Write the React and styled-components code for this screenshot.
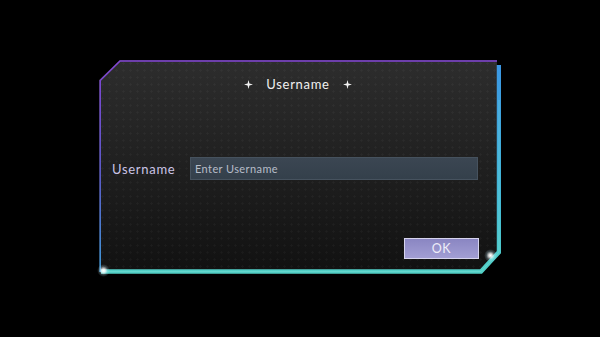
import React from 'react'
import styled, { createGlobalStyle } from 'styled-components'

const Global = createGlobalStyle`
  html, body {
    margin: 0;
    padding: 0;
    background: #000;
  }
  body {
    font-family: Lato, "Noto Sans", sans-serif;
  }
`

const Star = () => (
  <svg width="9" height="9" viewBox="0 0 10 10">
    <path d="M5 0 L6 4 L10 5 L6 6 L5 10 L4 6 L0 5 L4 4 Z" fill="#f2f2f2" />
  </svg>
)

const FrameLines = () => (
  <FrameSvg viewBox="0 0 402 214" width="402" height="214">
    <defs>
      <linearGradient id="thin" x1="0" y1="0" x2="0" y2="1">
        <stop offset="0" stopColor="#8244d4" />
        <stop offset="0.55" stopColor="#5a5cc8" />
        <stop offset="1" stopColor="#3f9ad8" />
      </linearGradient>
      <linearGradient id="thick" x1="0" y1="0" x2="0" y2="1">
        <stop offset="0" stopColor="#3b97e4" />
        <stop offset="0.7" stopColor="#44bcd4" />
        <stop offset="1" stopColor="#52cfc6" />
      </linearGradient>
    </defs>
    <path d="M1.2 212 L1.2 20.5 L21 1 L398 1" fill="none" stroke="url(#thin)" strokeWidth="1.6" />
    <path d="M400 5 L400 192 L382 211.5 L2 211.5" fill="none" stroke="url(#thick)" strokeWidth="4.5" />
    <path d="M400 40 L400 192 L382 211.5 L2 211.5" fill="none" stroke="#8ae6dc" strokeOpacity="0.35" strokeWidth="1" />
  </FrameSvg>
)

export default function App() {
  return (
    <>
      <Global />
      <Page>
        <Frame>
          <Panel>
            <Title>
              <Star />
              <span>Username</span>
              <Star />
            </Title>
            <Row>
              <Label>Username</Label>
              <Input placeholder="Enter Username" />
            </Row>
            <Actions>
              <OkButton>OK</OkButton>
            </Actions>
          </Panel>
          <FrameLines />
          <Sparkle $x={4} $y={210} />
          <Sparkle $x={391} $y={195} />
        </Frame>
      </Page>
    </>
  )
}

const Page = styled.div`
  width: 600px;
  height: 337px;
  background: #000;
  display: flex;
  justify-content: center;
  padding-top: 60px;
  box-sizing: border-box;
`

const Frame = styled.div`
  position: relative;
  width: 402px;
  height: 214px;
`

const FrameSvg = styled.svg`
  position: absolute;
  left: 0;
  top: 0;
  pointer-events: none;
`

const Panel = styled.div`
  width: 400px;
  height: 212px;
  box-sizing: border-box;
  display: flex;
  flex-direction: column;
  clip-path: polygon(0 20px, 21px 0, 398px 0, 398px 192px, 382px 212px, 0 212px);
  background:
    radial-gradient(circle, rgba(255, 255, 255, 0.035) 0.9px, transparent 1.3px) 0 0 / 7px 7px,
    linear-gradient(180deg, #2d2d2d 0%, #212121 45%, #111 100%);
  color: #eee;
`

const Title = styled.div`
  display: flex;
  align-items: center;
  justify-content: center;
  gap: 13px;
  margin-top: 15px;
  padding-right: 2px;
  font-size: 13px;
  letter-spacing: 0.7px;
  color: #f0f0f0;
  height: 18px;
`

const Row = styled.div`
  display: flex;
  align-items: center;
  margin-top: 64px;
  padding-left: 13px;
`

const Label = styled.label`
  width: 78px;
  font-size: 13px;
  color: #cbc4e6;
  letter-spacing: 0.7px;
`

const Input = styled.input`
  width: 288px;
  height: 23px;
  box-sizing: border-box;
  border: 1px solid #46525e;
  background: linear-gradient(180deg, #3b4652, #34404b);
  color: #d8dce4;
  font-family: inherit;
  font-size: 11px;
  letter-spacing: 0.4px;
  padding: 0 4px;
  outline: none;
  &::placeholder {
    color: #b7bdc9;
  }
`

const Actions = styled.div`
  display: flex;
  justify-content: flex-end;
  margin-top: 58px;
  padding-right: 20px;
`

const OkButton = styled.button`
  width: 75px;
  height: 21px;
  border: 1px solid #d6d4ee;
  background: linear-gradient(180deg, #8a86c2, #a29ed4);
  color: #eeedf8;
  font-family: inherit;
  font-size: 12.5px;
  letter-spacing: 0.5px;
  padding: 0;
`

const Sparkle = styled.span`
  position: absolute;
  left: ${p => p.$x}px;
  top: ${p => p.$y}px;
  width: 13px;
  height: 13px;
  margin: -6px 0 0 -6px;
  border-radius: 50%;
  background: radial-gradient(circle, #fff 0%, rgba(255, 255, 255, 0.85) 18%, rgba(200, 240, 255, 0.25) 45%, transparent 70%);
`
